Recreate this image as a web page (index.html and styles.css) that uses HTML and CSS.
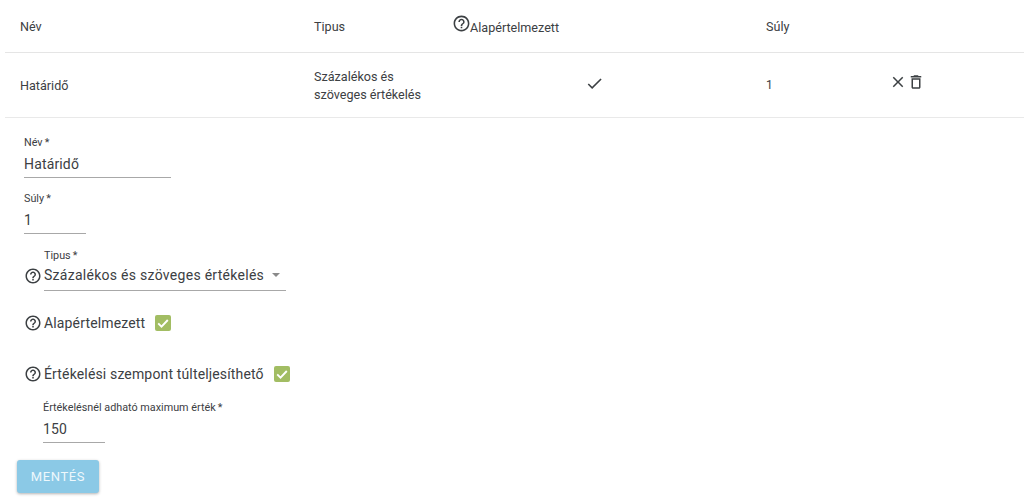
FILE: index.html
```html
<!DOCTYPE html>
<html lang="hu">
<head>
    <meta charset="UTF-8">
    <meta name="viewport" content="width=device-width, initial-scale=1.0">
    <title>Értékelési szempontok</title>
    <link rel="stylesheet" href="styles.css">
</head>
<body>
    <div class="table">
        <div class="table-row table-head">
            <div class="cell">Név</div>
            <div class="cell">Tipus</div>
            <div class="cell head-default">
                <svg class="help help-head" viewBox="0 0 24 24"><path d="M11 18h2v-2h-2v2zm1-16C6.48 2 2 6.48 2 12s4.48 10 10 10 10-4.48 10-10S17.52 2 12 2zm0 18c-4.41 0-8-3.59-8-8s3.59-8 8-8 8 3.59 8 8-3.59 8-8 8zm0-14c-2.21 0-4 1.79-4 4h2c0-1.1.9-2 2-2s2 .9 2 2c0 2-3 1.75-3 5h2c0-2.25 3-2.5 3-5 0-2.21-1.79-4-4-4z"/></svg>
                <span class="head-default-text">Alapértelmezett</span>
            </div>
            <div class="cell">Súly</div>
            <div class="cell"></div>
        </div>
        <div class="table-row table-body">
            <div class="cell">Határidő</div>
            <div class="cell cell-type">Százalékos és szöveges értékelés</div>
            <div class="cell cell-check">
                <svg class="icon" viewBox="0 0 24 24"><path d="M9 16.17 4.83 12l-1.42 1.41L9 19 21 7l-1.41-1.41z"/></svg>
            </div>
            <div class="cell cell-weight">1</div>
            <div class="cell cell-actions">
                <svg class="icon" viewBox="0 0 24 24"><path d="M19 6.41 17.59 5 12 10.59 6.41 5 5 6.41 10.59 12 5 17.59 6.41 19 12 13.41 17.59 19 19 17.59 13.41 12z"/></svg>
                <svg class="icon" viewBox="0 0 24 24"><path d="M6 19c0 1.1.9 2 2 2h8c1.1 0 2-.9 2-2V7H6v12zM8 9h8v10H8V9zm7.5-5-1-1h-5l-1 1H5v2h14V4z"/></svg>
            </div>
        </div>
    </div>

    <form class="form">
        <div class="field field-name">
            <label class="field-label">Név&#8201;*</label>
            <div class="field-value">Határidő</div>
        </div>
        <div class="field field-weight">
            <label class="field-label">Súly&#8201;*</label>
            <div class="field-value">1</div>
        </div>
        <div class="with-help type-row">
            <svg class="help" viewBox="0 0 24 24"><path d="M11 18h2v-2h-2v2zm1-16C6.48 2 2 6.48 2 12s4.48 10 10 10 10-4.48 10-10S17.52 2 12 2zm0 18c-4.41 0-8-3.59-8-8s3.59-8 8-8 8 3.59 8 8-3.59 8-8 8zm0-14c-2.21 0-4 1.79-4 4h2c0-1.1.9-2 2-2s2 .9 2 2c0 2-3 1.75-3 5h2c0-2.25 3-2.5 3-5 0-2.21-1.79-4-4-4z"/></svg>
            <div class="field field-type">
                <label class="field-label">Tipus&#8201;*</label>
                <div class="field-value select-value">
                    <span>Százalékos és szöveges értékelés</span>
                    <span class="caret"></span>
                </div>
            </div>
        </div>
        <div class="with-help check-row check-default">
            <svg class="help" viewBox="0 0 24 24"><path d="M11 18h2v-2h-2v2zm1-16C6.48 2 2 6.48 2 12s4.48 10 10 10 10-4.48 10-10S17.52 2 12 2zm0 18c-4.41 0-8-3.59-8-8s3.59-8 8-8 8 3.59 8 8-3.59 8-8 8zm0-14c-2.21 0-4 1.79-4 4h2c0-1.1.9-2 2-2s2 .9 2 2c0 2-3 1.75-3 5h2c0-2.25 3-2.5 3-5 0-2.21-1.79-4-4-4z"/></svg>
            <span class="check-label">Alapértelmezett</span>
            <span class="checkbox"><svg viewBox="0 0 16 16"><path d="M3.2 8.4 6.5 11.6 12.8 5" fill="none" stroke="#fff" stroke-width="1.9"/></svg></span>
        </div>
        <div class="with-help check-row check-over">
            <svg class="help" viewBox="0 0 24 24"><path d="M11 18h2v-2h-2v2zm1-16C6.48 2 2 6.48 2 12s4.48 10 10 10 10-4.48 10-10S17.52 2 12 2zm0 18c-4.41 0-8-3.59-8-8s3.59-8 8-8 8 3.59 8 8-3.59 8-8 8zm0-14c-2.21 0-4 1.79-4 4h2c0-1.1.9-2 2-2s2 .9 2 2c0 2-3 1.75-3 5h2c0-2.25 3-2.5 3-5 0-2.21-1.79-4-4-4z"/></svg>
            <span class="check-label">Értékelési szempont túlteljesíthető</span>
            <span class="checkbox"><svg viewBox="0 0 16 16"><path d="M3.2 8.4 6.5 11.6 12.8 5" fill="none" stroke="#fff" stroke-width="1.9"/></svg></span>
        </div>
        <div class="field field-max">
            <label class="field-label">Értékelésnél adható maximum érték&#8201;*</label>
            <div class="field-value">150</div>
        </div>
        <button type="button" class="save-button">MENTÉS</button>
    </form>
</body>
</html>
```

FILE: styles.css
```css
body {
    margin: 0;
    height: 500px;
    overflow: hidden;
    background-color: white;
    color: #3c4043;
    font-family: Roboto, "Liberation Sans", sans-serif;
}

.table {
    margin-left: 5px;
}

.table-row {
    display: grid;
    grid-template-columns: 294px 139px 313px 126px 1fr;
    padding-left: 15px;
    font-size: 12.6px;
    box-sizing: border-box;
}

.table-head {
    height: 53px;
    border-bottom: 1px solid #e5e5e5;
    padding-top: 19px;
}

.table-body {
    height: 65px;
    border-bottom: 1px solid #e9e9e9;
    align-items: center;
}

.head-default {
    display: flex;
    align-items: flex-start;
    margin-top: -5px;
}

.head-default-text {
    margin-top: 6px;
}

.help {
    width: 18px;
    height: 18px;
    fill: #3c4043;
    flex-shrink: 0;
}

.help-head {
    width: 19px;
    height: 19px;
    margin-left: -1px;
    margin-right: -1px;
}

.cell-type {
    width: 120px;
    line-height: 18px;
    padding-top: 1px;
}

.cell-check {
    padding-left: 132px;
}

.cell-check .icon {
    display: block;
    width: 19px;
    height: 19px;
    margin-top: -4px;
}

.cell-weight {
    font-size: 12px;
}

.cell-actions {
    display: flex;
    margin-top: -6px;
    margin-left: -3px;
}

.icon {
    width: 18px;
    height: 18px;
    fill: #3c4043;
}

.form {
    padding-left: 24px;
}

.field-label {
    display: block;
    font-size: 10.8px;
    line-height: 13px;
    color: #3c4043;
}

.field-value {
    font-size: 14px;
    line-height: 20px;
    letter-spacing: 0.15px;
    padding: 5px 0 3px;
    border-bottom: 1px solid #a8a8a8;
}

.field-name {
    width: 147px;
    padding-top: 18px;
}

.field-weight {
    width: 62px;
    padding-top: 14px;
}

.with-help {
    display: flex;
}

.type-row {
    align-items: flex-end;
    padding-top: 15px;
}

.type-row .help {
    margin: 0 2px 6px 0;
}

.field-type {
    width: 242px;
}

.select-value {
    display: flex;
    justify-content: space-between;
    align-items: center;
    padding: 3px 0 5px;
    letter-spacing: 0.28px;
}

.caret {
    width: 0;
    height: 0;
    margin-right: 6px;
    border-left: 4px solid transparent;
    border-right: 4px solid transparent;
    border-top: 4px solid #8a8a8a;
}

.check-row {
    align-items: center;
    height: 18px;
}

.check-row .help {
    margin: -1px 2px 0 0;
}

.check-label {
    font-size: 14px;
    letter-spacing: 0.15px;
}

.check-default {
    margin-top: 23px;
}

.check-over {
    margin-top: 33px;
}

.checkbox {
    width: 16px;
    height: 16px;
    margin-left: 10px;
    background-color: #a2bd63;
    border-radius: 2px;
}

.checkbox svg {
    display: block;
}

.field-max {
    width: 62px;
    margin-left: 19px;
    padding-top: 18px;
    white-space: nowrap;
}

.save-button {
    display: block;
    margin: 17px 0 0 -7px;
    width: 82px;
    height: 33px;
    border: none;
    border-radius: 3px;
    background-color: #8bc9e6;
    color: #eef8fc;
    font-family: inherit;
    font-size: 13px;
    letter-spacing: 0.6px;
    box-shadow: 0 1px 3px rgba(0, 0, 0, 0.3);
}
```
